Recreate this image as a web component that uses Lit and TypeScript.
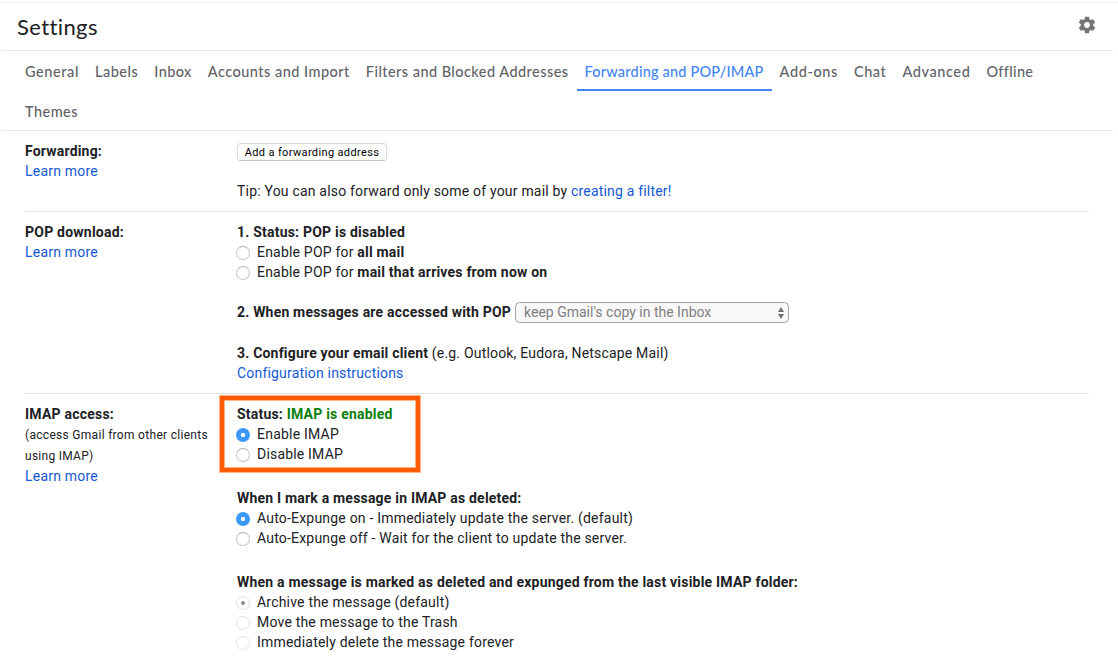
import { LitElement, html, css, svg } from "lit";
import { customElement } from "lit/decorators.js";
import { styleMap } from "lit/directives/style-map.js";

const ctx = document.createElement("canvas").getContext("2d")!;

/** Letter spacing that makes `text` in `font` take up `width` pixels. */
function tracking(text: string, font: string, width: number) {
  ctx.font = font;
  return `${((width - ctx.measureText(text).width) / text.length).toFixed(3)}px`;
}

const fit = (text: string, font: string, width: number) =>
  html`<span style=${styleMap({ letterSpacing: tracking(text, font, width) })}>${text}</span>`;

const TAB_FONT = "500 14.5px Lato";
const BODY = "14px Roboto";
const BOLD = "700 14px Roboto";

const TABS: { label: string; width: number; active?: boolean }[] = [
  { label: "General", width: 54 },
  { label: "Labels", width: 43.3 },
  { label: "Inbox", width: 37.5 },
  { label: "Accounts and Import", width: 142 },
  { label: "Filters and Blocked Addresses", width: 203.2 },
  { label: "Forwarding and POP/IMAP", width: 179, active: true },
  { label: "Add-ons", width: 58.3 },
  { label: "Chat", width: 32.5 },
  { label: "Advanced", width: 68 },
  { label: "Offline", width: 46.5 },
  { label: "Themes", width: 53 },
];

@customElement("app-root")
export class AppRoot extends LitElement {
  static styles = css`
    :host {
      display: block;
      width: 1118px;
      height: 660px;
      overflow: hidden;
      background: #fff;
      color: #202124;
      font: 14px/20px Roboto, sans-serif;
      white-space: nowrap;
      box-sizing: border-box;
      padding-top: 2px;
    }
    *, *::before { box-sizing: border-box; }
    header {
      display: flex;
      align-items: center;
      justify-content: space-between;
      height: 48px;
      border-top: 1px solid #eceded;
      padding: 0 21px 2px 17px;
    }
    h1 { margin: 2px 0 0; font: 400 22px/28px Lato, sans-serif; }
    .gear { display: block; width: 20px; height: 20px; fill: #757575; margin-top: -2px; }
    nav {
      display: flex;
      flex-wrap: wrap;
      margin: 0 5px 0 1px;
      padding: 0 60px 0 16px;
      height: 81px;
      align-content: flex-start;
      border-top: 1px solid #ebebeb;
      border-bottom: 1px solid #ebebeb;
    }
    .tab {
      height: 40px;
      padding: 0 8px;
      font: 500 14.5px/41px Lato, sans-serif;
      color: #5f6368;
      text-decoration: none;
    }
    .active { color: #4285f4; border-bottom: 2px solid #4285f4; }
    .row {
      display: grid;
      grid-template-columns: 212px 1fr;
      margin: 0 29px 0 25px;
      padding: 10px 0;
      border-bottom: 1px solid #e3e3e3;
    }
    .row:last-child { border: 0; }
    .line { height: 20px; }
    .bold { font-weight: 700; }
    .note { height: 42px; padding-top: 1px; font-size: 12px; line-height: 21px; }
    .link { color: #1558d6; text-decoration: none; }
    .green { color: #0a800a; }
    .gap { margin-top: 24px; }
    .btn {
      display: block;
      width: 150px;
      height: 18px;
      margin: 2px 0 20px;
      padding: 1px 0 0;
      font: 11px/15px Roboto, sans-serif;
      color: #000;
      background: #fff;
      border: 1px solid #dadada;
      border-bottom-color: #c4c4c4;
      border-radius: 4px;
    }
    .radio { display: flex; height: 20px; align-items: center; }
    .dot {
      width: 14px;
      height: 14px;
      margin: 2px 7px 0 -1px;
      border-radius: 50%;
      border: 1px solid #c6c6c6;
      border-top-color: #b0b0b0;
      background: #fff;
    }
    .on { border: 0; background: radial-gradient(circle, #fff 1.8px, #3b99fc 2.5px); }
    .off { border-color: #e0e0e0; }
    .dim { border-color: #dedede; background: radial-gradient(circle, #8c8c8c 1.5px, #fff 2.3px); }
    .choice { display: flex; height: 21px; margin: 20px 0; }
    .select {
      display: flex;
      justify-content: space-between;
      width: 274px;
      height: 21px;
      margin-left: 4px;
      padding: 0 3px 0 8px;
      line-height: 18px;
      border: 1px solid #a2a2a2;
      border-radius: 4.5px;
      background: #f8f8f8;
      color: #808080;
    }
    .arrows { width: 8px; height: 14px; margin-top: 3px; fill: #6f6f6f; }
    .status { position: relative; }
    .status::before {
      content: "";
      position: absolute;
      left: -17px;
      top: -8px;
      width: 200px;
      height: 76px;
      border: 4px solid #fe5a02;
      box-shadow: 0 0 0 1px #ffb488, inset 0 0 0 1px #ffb488;
      pointer-events: none;
    }
  `;

  private radio(label: unknown, kind = "") {
    return html`<div class="radio"><span class="dot ${kind}"></span><span>${label}</span></div>`;
  }

  private learnMore() {
    return html`<div class="line"><a class="link">${fit("Learn more", BODY, 73)}</a></div>`;
  }

  private bold(text: string, width: number) {
    return html`<span class="bold">${fit(text, BOLD, width)}</span>`;
  }

  render() {
    return html`
      <header>
        <h1>${fit("Settings", "400 22px Lato", 80.3)}</h1>
        <svg class="gear" viewBox="0 0 24 24">
          ${svg`<path d="M19.43 12.98c.04-.32.07-.64.07-.98s-.03-.66-.07-.98l2.11-1.65c.19-.15.24-.42.12-.64l-2-3.46c-.12-.22-.39-.3-.61-.22l-2.49 1c-.52-.4-1.08-.73-1.69-.98l-.38-2.65C14.46 2.18 14.25 2 14 2h-4c-.25 0-.46.18-.49.42l-.38 2.65c-.61.25-1.17.59-1.69.98l-2.49-1c-.23-.09-.49 0-.61.22l-2 3.46c-.13.22-.07.49.12.64l2.11 1.65c-.04.32-.07.65-.07.98s.03.66.07.98l-2.11 1.65c-.19.15-.24.42-.12.64l2 3.46c.12.22.39.3.61.22l2.49-1c.52.4 1.08.73 1.69.98l.38 2.65c.03.24.24.42.49.42h4c.25 0 .46-.18.49-.42l.38-2.65c.61-.25 1.17-.59 1.69-.98l2.49 1c.23.09.49 0 .61-.22l2-3.46c.12-.22.07-.49-.12-.64l-2.11-1.65zM12 15.5c-1.93 0-3.5-1.57-3.5-3.5s1.57-3.5 3.5-3.5 3.5 1.57 3.5 3.5-1.57 3.5-3.5 3.5z"/>`}
        </svg>
      </header>
      <nav>
        ${TABS.map(t => html`<a class="tab ${t.active ? "active" : ""}">${fit(t.label, TAB_FONT, t.width)}</a>`)}
      </nav>
      <section class="row">
        <div>
          <div class="line">${this.bold("Forwarding:", 77)}</div>
          ${this.learnMore()}
        </div>
        <div>
          <button class="btn">${fit("Add a forwarding address", "11px Roboto", 134.5)}</button>
          <div class="line">${fit("Tip: You can also forward only some of your mail by ", BODY, 334)}<a class="link">${fit("creating a filter!", BODY, 100)}</a></div>
        </div>
      </section>
      <section class="row">
        <div>
          <div class="line">${this.bold("POP download:", 99)}</div>
          ${this.learnMore()}
        </div>
        <div>
          <div class="line">${this.bold("1. Status: POP is disabled", 168)}</div>
          ${this.radio(html`${fit("Enable POP for ", BODY, 100.3)}${this.bold("all mail", 47)}`)}
          ${this.radio(html`${fit("Enable POP for ", BODY, 100.3)}${this.bold("mail that arrives from now on", 190)}`)}
          <div class="choice">
            ${this.bold("2. When messages are accessed with POP", 274)}
            <div class="select">
              ${fit("keep Gmail's copy in the Inbox", BODY, 187.3)}
              <svg class="arrows" viewBox="0 0 8 14"><path d="M4 1 7 6H1ZM4 13 1 8H7Z"></path></svg>
            </div>
          </div>
          <div class="line">${this.bold("3. Configure your email client", 191)}${fit(" (e.g. Outlook, Eudora, Netscape Mail)", BODY, 240.4)}</div>
          <div class="line"><a class="link">${fit("Configuration instructions", BODY, 166)}</a></div>
        </div>
      </section>
      <section class="row">
        <div>
          <div class="line">${this.bold("IMAP access:", 89)}</div>
          <div class="note">
            ${fit("(access Gmail from other clients", "12px Roboto", 183)}<br />${fit("using IMAP)", "12px Roboto", 68.5)}
          </div>
          ${this.learnMore()}
        </div>
        <div>
          <div class="status">
            <div class="line">${this.bold("Status: ", 49.7)}<span class="green">${this.bold("IMAP is enabled", 105.8)}</span></div>
            ${this.radio(fit("Enable IMAP", BODY, 82), "on")}
            ${this.radio(fit("Disable IMAP", BODY, 86))}
          </div>
          <div class="line gap">${this.bold("When I mark a message in IMAP as deleted:", 284.5)}</div>
          ${this.radio(fit("Auto-Expunge on - Immediately update the server. (default)", BODY, 376), "on")}
          ${this.radio(fit("Auto-Expunge off - Wait for the client to update the server.", BODY, 370))}
          <div class="line gap">${this.bold("When a message is marked as deleted and expunged from the last visible IMAP folder:", 561)}</div>
          ${this.radio(fit("Archive the message (default)", BODY, 192.5), "dim")}
          ${this.radio(fit("Move the message to the Trash", BODY, 201), "off")}
          ${this.radio(fit("Immediately delete the message forever", BODY, 257), "off")}
        </div>
      </section>
    `;
  }
}
